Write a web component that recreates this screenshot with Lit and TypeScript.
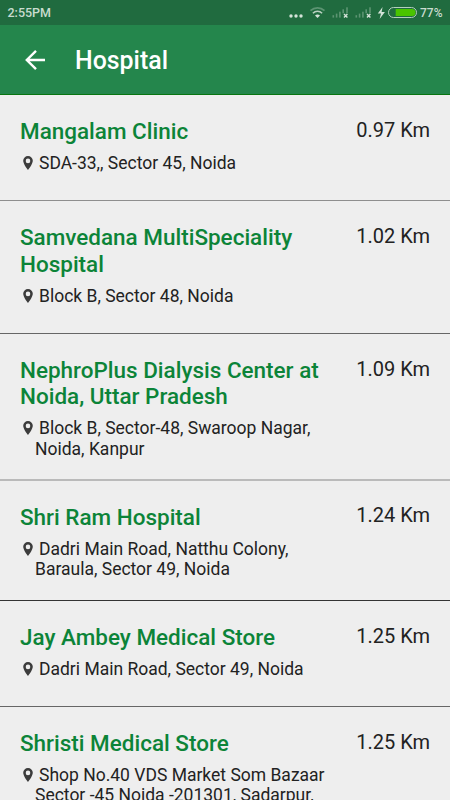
import { LitElement, html, css, svg } from "lit";
import { customElement, property } from "lit/decorators.js";

interface Place {
  name: string[];
  address: string[];
  distance: string;
}

const PLACES: Place[] = [
  { name: ["Mangalam Clinic"], address: ["SDA-33,, Sector 45, Noida"], distance: "0.97 Km" },
  { name: ["Samvedana MultiSpeciality", "Hospital"], address: ["Block B, Sector 48, Noida"], distance: "1.02 Km" },
  {
    name: ["NephroPlus Dialysis Center at", "Noida, Uttar Pradesh"],
    address: ["Block B, Sector-48, Swaroop Nagar,", "Noida, Kanpur"],
    distance: "1.09 Km",
  },
  { name: ["Shri Ram Hospital"], address: ["Dadri Main Road, Natthu Colony,", "Baraula, Sector 49, Noida"], distance: "1.24 Km" },
  { name: ["Jay Ambey Medical Store"], address: ["Dadri Main Road, Sector 49, Noida"], distance: "1.25 Km" },
  {
    name: ["Shristi Medical Store"],
    address: ["Shop No.40 VDS Market Som Bazaar", "Sector -45 Noida -201301, Sadarpur,"],
    distance: "1.25 Km",
  },
];

@customElement("status-bar")
export class StatusBar extends LitElement {
  static styles = css`
    :host {
      display: flex;
      align-items: center;
      justify-content: space-between;
      height: 25px;
      padding: 1px 8px 0 7.5px;
      background: #206b3f;
      color: #c9dccf;
      font: 500 12.5px/24px Roboto, sans-serif;
      box-sizing: border-box;
    }
    .icons { display: flex; align-items: center; }
    .icons svg { display: block; margin-top: -1px; }
    .percent { width: 22px; font-size: 12px; }
  `;

  private signal(x: number) {
    return svg`
      <g fill="#5c9472">
        <rect x=${x} y="15.2" width="1.6" height="2.4"></rect>
        <rect x=${x + 3.3} y="13.6" width="1.6" height="4"></rect>
        <rect x=${x + 6.6} y="11.7" width="1.6" height="5.9"></rect>
        <rect x=${x + 9.9} y="9.3" width="1.6" height="4"></rect>
        <rect x=${x + 13.7} y="7.3" width="1.6" height="6"></rect>
      </g>
      <path d="M${x + 11.5} 14l3.4 3.6m0-3.6l-3.4 3.6" stroke="#d5e3d9" stroke-width="1.4"></path>
    `;
  }

  render() {
    return html`
      <span>2:55PM</span>
      <span class="icons">
        <svg width="132" height="25" viewBox="288 0 132 25" fill="none">
          <g fill="#d5e3d9">
            <circle cx="291" cy="16" r="1.7"></circle>
            <circle cx="296" cy="16" r="1.7"></circle>
            <circle cx="301" cy="16" r="1.7"></circle>
          </g>
          <path d="M310.5 10.7a10.2 10.2 0 0 1 14 0" stroke="#5c9472" stroke-width="1.7"></path>
          <path d="M312.9 13.2a6.5 6.5 0 0 1 9.2 0" stroke="#b9d0c1" stroke-width="1.6"></path>
          <path d="M315 15.6a3.6 3.6 0 0 1 5 0L317.5 18z" fill="#d5e3d9"></path>
          ${this.signal(332.5)} ${this.signal(355.5)}
          <path d="M382.6 7l-4.8 6.5h3.2l-1.4 5.5 5.3-7.1h-3.3z" fill="#d5e3d9"></path>
          <rect x="388.5" y="7.5" width="28" height="10" rx="5" stroke="#b4cfbd"></rect>
          <path d="M395.7 9h16.3a3.5 3.5 0 0 1 0 7h-16.3z" fill="#4ac400"></path>
        </svg>
        <span class="percent">77%</span>
      </span>
    `;
  }
}

@customElement("place-row")
export class PlaceRow extends LitElement {
  @property({ attribute: false }) place!: Place;

  static styles = css`
    :host {
      display: flex;
      justify-content: space-between;
      flex: none;
      padding: 23px 20px 20.7px;
      border-bottom: 1px solid #8e8e8e;
      box-sizing: border-box;
      font-family: Roboto, sans-serif;
      white-space: nowrap;
    }
    .name {
      color: #0c8438;
      font-size: 22.48px;
      font-weight: 500;
      line-height: 26.6px;
    }
    .address {
      min-height: 26.4px;
      margin-top: 8.4px;
      padding-left: 15px;
      color: #222;
      font-size: 17.5px;
      line-height: 20.3px;
    }
    .first { display: flex; align-items: center; margin-left: -12.5px; }
    .pin { flex: none; margin: 0 6.5px 0 0; }
    .distance {
      margin-top: -0.2px;
      color: #222;
      font-size: 20px;
      line-height: 24px;
    }
  `;

  render() {
    const [first, ...rest] = this.place.address;
    return html`
      <div>
        ${this.place.name.map((line) => html`<div class="name">${line}</div>`)}
        <div class="address">
          <div class="first">
            <svg class="pin" width="10" height="14" viewBox="0 0 10 14">
              <path fill="#3c3c3c" fill-rule="evenodd"
                d="M5 0a4.8 4.8 0 0 1 4.8 4.8C9.8 8.2 5 14 5 14S.2 8.2.2 4.8A4.8 4.8 0 0 1 5 0zM5 2.6a2.3 2.3 0 1 0 0 4.6 2.3 2.3 0 0 0 0-4.6z"></path>
            </svg>
            <span>${first}</span>
          </div>
          ${rest.map((line) => html`<div>${line}</div>`)}
        </div>
      </div>
      <div class="distance">${this.place.distance}</div>
    `;
  }
}

@customElement("app-root")
export class AppRoot extends LitElement {
  static styles = css`
    :host {
      display: flex;
      flex-direction: column;
      width: 450px;
      height: 800px;
      overflow: hidden;
      background: #eee;
      font-family: Roboto, sans-serif;
    }
    status-bar { flex: none; }
    .bar {
      display: flex;
      align-items: center;
      flex: none;
      height: 70px;
      padding-left: 25px;
      box-sizing: border-box;
      background: #24864c;
      border-bottom: 1px solid #087510;
      color: #fff;
    }
    .back { margin-right: 30px; }
    .title {
      font-size: 24.9px;
      font-weight: 500;
      line-height: 30px;
      padding-top: 2px;
    }
    .list {
      display: flex;
      flex-direction: column;
      flex: 1;
      min-height: 0;
      overflow: hidden;
    }
    place-row:nth-child(2), place-row:nth-child(5) { border-bottom-color: #666; }
    place-row:nth-child(3) {
      border-bottom: 2px solid #bababa;
      padding-bottom: 19.7px;
    }
    place-row:nth-child(4) { border-bottom-color: #333; }
  `;

  render() {
    return html`
      <status-bar></status-bar>
      <div class="bar">
        <svg class="back" width="20" height="20" viewBox="0 0 20 20" fill="none" stroke="#fff" stroke-width="2.4">
          <path d="M20 10H2M11 .9L1.8 10l9.2 9.1"></path>
        </svg>
        <div class="title">Hospital</div>
      </div>
      <div class="list">
        ${PLACES.map((place) => html`<place-row .place=${place}></place-row>`)}
      </div>
    `;
  }
}
